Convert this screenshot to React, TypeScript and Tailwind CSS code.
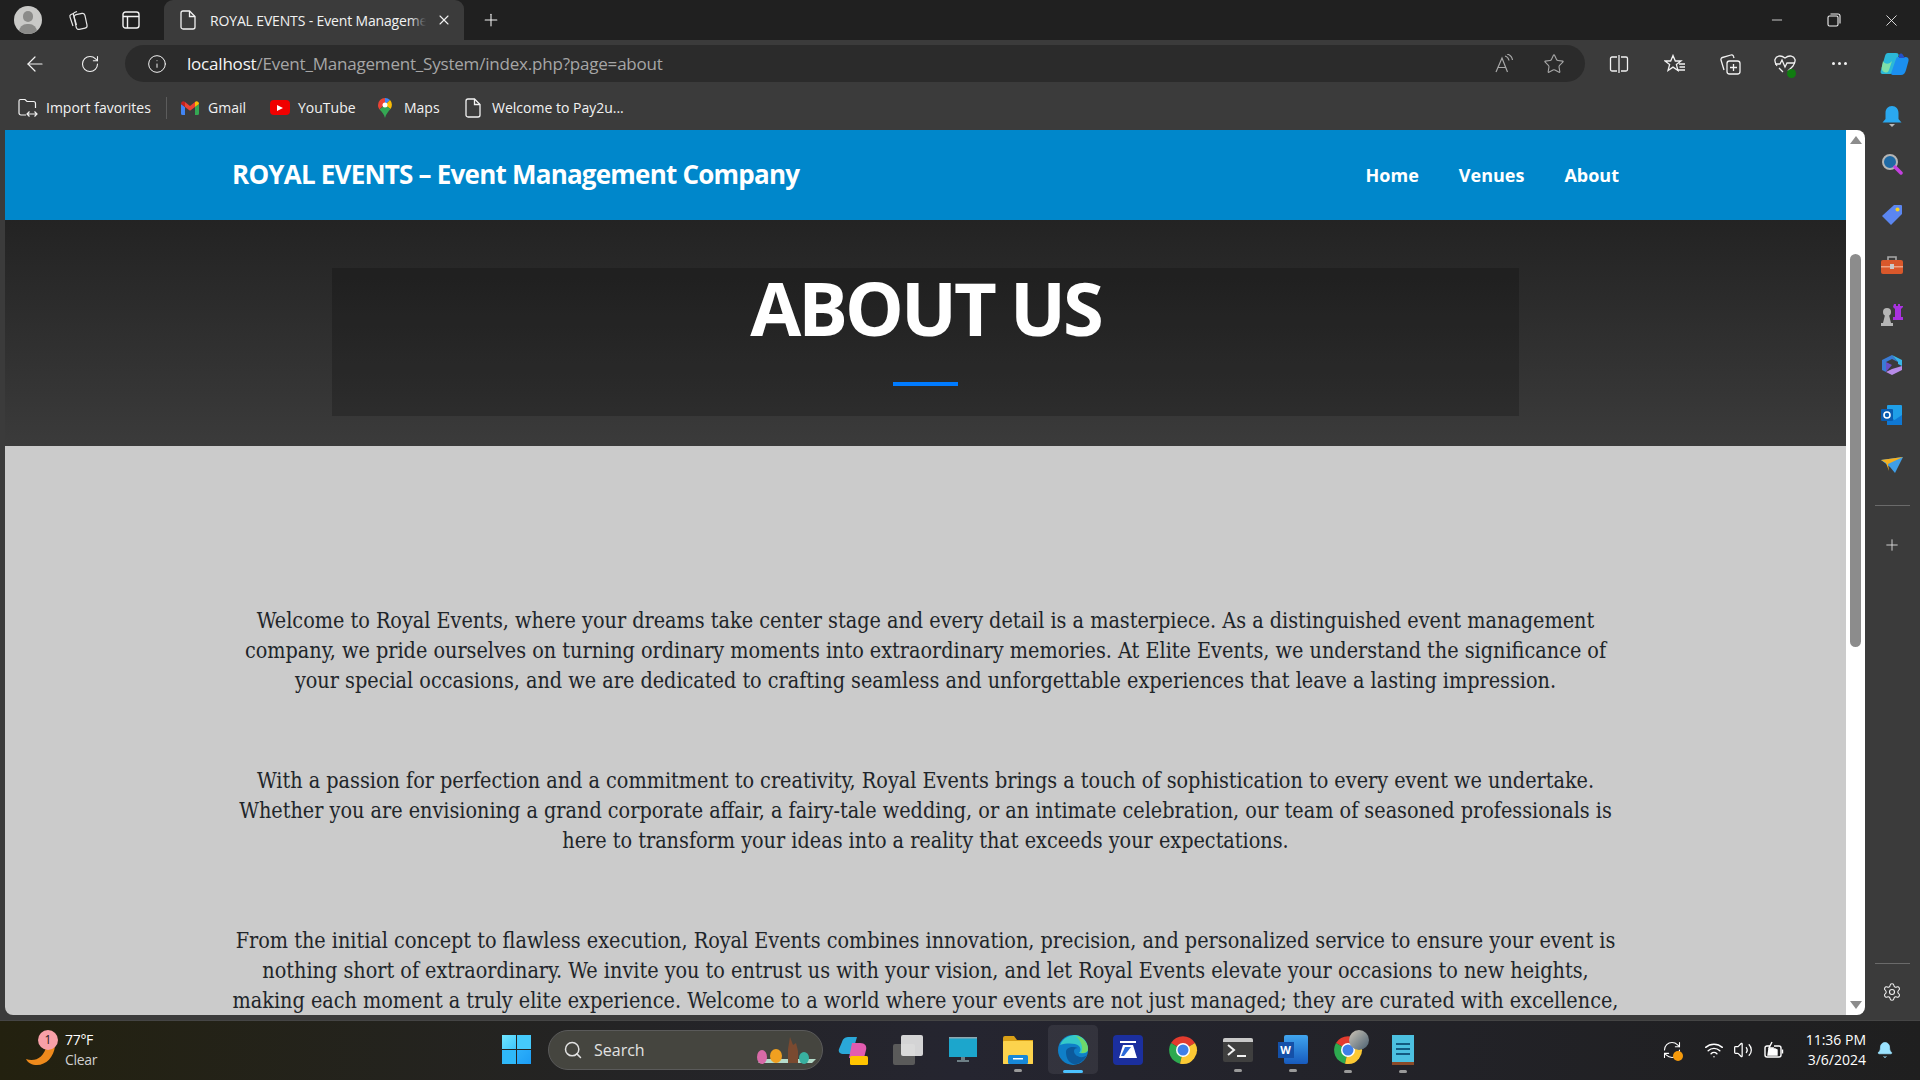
import { ArrowLeft, Bell, Info, Minus, Plus, RefreshCw, RotateCw, Search, Settings, Star, Volume2, Wifi, X } from 'lucide-react';
import type { ReactNode } from 'react';

const paragraphs = [
    [
        'Welcome to Royal Events, where your dreams take center stage and every detail is a masterpiece. As a distinguished event management',
        'company, we pride ourselves on turning ordinary moments into extraordinary memories. At Elite Events, we understand the significance of',
        'your special occasions, and we are dedicated to crafting seamless and unforgettable experiences that leave a lasting impression.',
    ],
    [
        'With a passion for perfection and a commitment to creativity, Royal Events brings a touch of sophistication to every event we undertake.',
        'Whether you are envisioning a grand corporate affair, a fairy-tale wedding, or an intimate celebration, our team of seasoned professionals is',
        'here to transform your ideas into a reality that exceeds your expectations.',
    ],
    [
        'From the initial concept to flawless execution, Royal Events combines innovation, precision, and personalized service to ensure your event is',
        'nothing short of extraordinary. We invite you to entrust us with your vision, and let Royal Events elevate your occasions to new heights,',
        'making each moment a truly elite experience. Welcome to a world where your events are not just managed; they are curated with excellence,',
    ],
];

function DocIcon() {
    return (
        <svg width="16" height="20" viewBox="0 0 16 20" fill="none" stroke="#f2f2f2" strokeWidth="1.3">
            <path d="M3 1h6.5L15 6.5V17a2 2 0 0 1-2 2H3a2 2 0 0 1-2-2V3a2 2 0 0 1 2-2z" />
            <path d="M9.5 1v5.5H15" />
        </svg>
    );
}

function ChromeIcon() {
    return (
        <svg width="30" height="30" viewBox="0 0 30 30">
            <path d="M15 15 3 8a14 14 0 0 1 24 0z" fill="#e33b2e" />
            <path d="M15 15 3 8a14 14 0 0 0 9 20.7z" fill="#2da94f" />
            <path d="M15 15 27 8a14 14 0 0 1-15 20.7z" fill="#fcc934" />
            <circle cx="15" cy="15" r="7" fill="#fff" />
            <circle cx="15" cy="15" r="5.5" fill="#3f7fe8" />
        </svg>
    );
}

function Slot({ w, children, className = '' }: { w: string; children?: ReactNode; className?: string }) {
    return <div className={`flex shrink-0 items-center justify-center ${w} ${className}`}>{children}</div>;
}

function TabStrip() {
    return (
        <div className="flex h-10 shrink-0 items-end bg-[#202020] text-[#f2f2f2]">
            <Slot w="w-[56px]" className="h-10">
                <div className="relative h-7 w-7 overflow-hidden rounded-full bg-[#c9c9c7]">
                    <div className="absolute left-[9px] top-[5px] h-[11px] w-[10px] rounded-full bg-[#8b8b89]" />
                    <div className="absolute left-[5px] top-[18px] h-4 w-[18px] rounded-full bg-[#8b8b89]" />
                </div>
            </Slot>
            <Slot w="w-[44px]" className="h-10">
                <svg width="22" height="22" viewBox="0 0 22 22" fill="none" stroke="#e6e6e6" strokeWidth="1.2">
                    <rect x="8" y="5" width="11" height="15" rx="2.5" transform="rotate(-12 13 12)" />
                    <path d="M6.5 4.5 4 5.5a2 2 0 0 0-1 2.5l3 9" />
                    <path d="M10 2.5 7.5 3.5a2 2 0 0 0-1 2.5l3 10" />
                </svg>
            </Slot>
            <Slot w="w-[62px]" className="h-10">
                <svg width="18" height="18" viewBox="0 0 18 18" fill="none" stroke="#f2f2f2" strokeWidth="1.4">
                    <rect x="1" y="1" width="16" height="16" rx="2.5" />
                    <path d="M1 5.5h16M5.5 5.5V17" />
                </svg>
            </Slot>
            <div className="ml-[2px] flex h-10 w-[300px] shrink-0 items-center rounded-t-[9px] bg-[#3b3b3b] pl-4 pr-[12px]">
                <DocIcon />
                <div className="relative ml-[14px] w-[216px] overflow-hidden">
                    <span className="block whitespace-nowrap font-['Open_Sans',sans-serif] text-[14px] tracking-[-0.15px]">
                        ROYAL EVENTS - Event Management Company
                    </span>
                    <div className="absolute inset-y-0 right-0 w-4 bg-gradient-to-r from-transparent to-[#3b3b3b]" />
                </div>
                <X size={16} strokeWidth={1.6} className="ml-auto" />
            </div>
            <Slot w="w-[54px]" className="h-10">
                <Plus size={20} strokeWidth={1.3} />
            </Slot>
            <div className="flex-1" />
            <Slot w="w-[57px]" className="h-10"><Minus size={16} strokeWidth={1.2} /></Slot>
            <Slot w="w-[57px]" className="h-10">
                <svg width="14" height="14" viewBox="0 0 14 14" fill="none" stroke="#f2f2f2" strokeWidth="1.1">
                    <rect x="1" y="3" width="10" height="10" rx="1.5" />
                    <path d="M3.5 1h7.5A2 2 0 0 1 13 3v7.5" />
                </svg>
            </Slot>
            <Slot w="w-[58px]" className="h-10"><X size={19} strokeWidth={1.1} /></Slot>
        </div>
    );
}

function AddressBar() {
    return (
        <div className="flex h-[47px] shrink-0 items-center bg-[#3b3b3b] text-[#f2f2f2]">
            <Slot w="w-[70px]"><ArrowLeft size={24} strokeWidth={1.2} /></Slot>
            <Slot w="w-[40px]"><RotateCw size={20} strokeWidth={1.3} /></Slot>
            <div className="ml-[15px] flex h-[37px] w-[1460px] shrink-0 items-center rounded-full bg-[#2b2b2b] pl-[22px] pr-[20px]">
                <Info size={20} strokeWidth={1.2} />
                <span className="ml-[20px] font-['Open_Sans',sans-serif] text-[17px] tracking-[-0.2px] text-[#f5f5f5]">
                    localhost<span className="text-[#a6a6a6]">/Event_Management_System/index.php?page=about</span>
                </span>
                <div className="ml-auto flex items-center gap-[28px] text-[#a8a8a8]">
                    <svg width="20" height="20" viewBox="0 0 20 20" fill="none" stroke="#a8a8a8" strokeWidth="1.2">
                        <path d="M1 18 7 4l5.500 14M3 13.500h8" />
                        <path d="M10 2c2 .5 3.500 2 4 4.500M12 0c3 .8 5 3 5.500 6" />
                    </svg>
                    <Star size={22} strokeWidth={1.2} />
                </div>
            </div>
            <Slot w="w-[24px]" />
            <Slot w="w-[20px]">
                <svg width="20" height="20" viewBox="0 0 20 20" fill="none" stroke="#f2f2f2" strokeWidth="1.3">
                    <path d="M8 3H3a1.5 1.5 0 0 0-1.5 1.5v11A1.5 1.5 0 0 0 3 17h5M12 3h5a1.5 1.5 0 0 1 1.5 1.5v11A1.5 1.5 0 0 1 17 17h-5M10 1v18" />
                </svg>
            </Slot>
            <Slot w="w-[35px]" />
            <Slot w="w-[22px]">
                <svg width="22" height="20" viewBox="0 0 22 20" fill="none" stroke="#f2f2f2" strokeWidth="1.3">
                    <path d="M9 1.5 11.3 7H17l-4.6 3.6 1.6 5.9-5-3.4-5 3.4 1.6-5.9L1 7h5.7z" />
                    <path d="M15 10h6M15.500 13h5.500M13 16h8" />
                </svg>
            </Slot>
            <Slot w="w-[33px]" />
            <Slot w="w-[22px]">
                <svg width="22" height="22" viewBox="0 0 22 22" fill="none" stroke="#f2f2f2" strokeWidth="1.3">
                    <rect x="8" y="8" width="13" height="13" rx="2.5" />
                    <path d="M14.5 11v7M11 14.5h7" />
                    <path d="M5 17 2 7a2 2 0 0 1 1.400-2.500L12 2a2 2 0 0 1 2.500 1.400L15 5" />
                </svg>
            </Slot>
            <Slot w="w-[33px]" />
            <Slot w="w-[22px]" className="relative">
                <svg width="22" height="20" viewBox="0 0 22 20" fill="none" stroke="#f2f2f2" strokeWidth="1.3">
                    <path d="M3 12C1 9 .5 7.500 1 5.500 2 2 6.500 .5 11 4c4.500-3.500 9-2 10 1.500.5 2 0 3.500-2 6.500l-5 5" />
                    <path d="M1 10h5l2-4 3 7 2-4h8M5 14l4 4" />
                </svg>
                <span className="absolute -bottom-[4px] right-0 h-[9px] w-[9px] rounded-full bg-[#107c10]" />
            </Slot>
            <Slot w="w-[32px]" />
            <Slot w="w-[22px]">
                <div className="flex gap-[3px]">
                    <span className="h-[3px] w-[3px] rounded-full bg-[#f2f2f2]" />
                    <span className="h-[3px] w-[3px] rounded-full bg-[#f2f2f2]" />
                    <span className="h-[3px] w-[3px] rounded-full bg-[#f2f2f2]" />
                </div>
            </Slot>
            <Slot w="w-[30px]" />
            <Slot w="w-[30px]">
                <svg width="30" height="26" viewBox="0 0 30 26">
                    <path d="M8 2h8c2 0 3 1 2.500 3L14 20c-.6 2-2 3-4 3H3c-2 0-3-1-2-4L5 5c.5-2 1.500-3 3-3z" fill="#2bb8d8" />
                    <path d="M3 10c2 4 7 3 9 0L9 19c-1 3-3 3-5 2-2-1-3-3-2-6z" fill="#7ee0a8" />
                    <path d="M18 6h7c3 0 4 1.500 3.500 4L26 19c-.7 3-2.500 5-5 5h-8c-2 0-2-1-1.500-3L16 8c.3-1.300 1-2 2-2z" fill="#1b8fef" />
                    <path d="M19 4c1-2 3-2 4 0l2 3h-6z" fill="#2450c8" />
                </svg>
            </Slot>
        </div>
    );
}

function Bookmark({ icon, label, w, gap = 'gap-[8px]' }: { icon: ReactNode; label: string; w: string; gap?: string }) {
    return (
        <div className={`flex shrink-0 items-center ${gap} ${w}`}>
            {icon}
            <span className="whitespace-nowrap font-['Open_Sans',sans-serif] text-[14px] text-[#f2f2f2]">{label}</span>
        </div>
    );
}

function Bookmarks() {
    return (
        <div className="flex h-[43px] shrink-0 items-center bg-[#3b3b3b] pb-[2px] pl-[18px]">
            <Bookmark
                w="w-[148px]"
                label="Import favorites"
                icon={
                    <svg width="20" height="20" viewBox="0 0 20 20" fill="none" stroke="#f2f2f2" strokeWidth="1.2">
                        <path d="M8 17H3a2 2 0 0 1-2-2V3a1.500 1.500 0 0 1 1.500-1.500H7l2 2h6.500A2 2 0 0 1 17.500 5.500V10" />
                        <path d="M9 16h10M11.500 13.500 9 16l2.500 2.500M16.500 13.500 19 16l-2.500 2.500" />
                    </svg>
                }
            />
            <div className="mr-[14px] h-[22px] w-px shrink-0 bg-[#5c5c5c]" />
            <Bookmark
                w="w-[89px]"
                label="Gmail"
                gap="gap-[9px]"
                icon={
                    <svg width="18" height="14" viewBox="0 0 18 14">
                        <path d="M0 3v9.500A1.500 1.500 0 0 0 1.500 14H4V6z" fill="#4285f4" />
                        <path d="M14 6v8h2.500a1.500 1.500 0 0 0 1.500-1.500V3z" fill="#34a853" />
                        <path d="M4 6V1L9 5l5-4v5L9 9.800z" fill="#ea4335" />
                        <path d="M0 3c0-2.500 2.500-3.500 4-2v5z" fill="#c5221f" />
                        <path d="M14 1c1.500-1.500 4-.5 4 2l-4 3z" fill="#fbbc04" />
                    </svg>
                }
            />
            <Bookmark
                w="w-[108px]"
                label="YouTube"
                icon={
                    <div className="flex h-[15px] w-[20px] items-center justify-center rounded-[4px] bg-[#f00000]">
                        <div className="h-0 w-0 border-y-[3.500px] border-l-[6px] border-y-transparent border-l-white" />
                    </div>
                }
            />
            <Bookmark
                w="w-[87px]"
                label="Maps"
                gap="gap-[12px]"
                icon={
                    <svg width="14" height="20" viewBox="0 0 14 20">
                        <path d="M7 0a7 7 0 0 0-7 7c0 2 .7 3.300 1.500 4.500L7 6z" fill="#ea4335" />
                        <path d="M7 0a7 7 0 0 1 5 2L7 7z" fill="#4285f4" />
                        <path d="M12 2a7 7 0 0 1 .5 9L7 7z" fill="#fbbc04" />
                        <path d="M1.500 11.500 7 7l5.500 4C10 14 8 16 7 20c-1-4-3-6-5.500-8.500z" fill="#34a853" />
                        <circle cx="7" cy="7" r="2.500" fill="#fff" />
                    </svg>
                }
            />
            <Bookmark w="w-[170px]" gap="gap-[11px]" label="Welcome to Pay2u..." icon={<DocIcon />} />
        </div>
    );
}

function PageContent() {
    return (
        <div className="flex h-full min-w-0 flex-1 flex-col overflow-hidden">
            <nav className="flex h-[90px] shrink-0 items-center bg-[#0087cb] pl-[227px] font-['Open_Sans',sans-serif] font-bold text-white">
                <span className="mt-[-2px] text-[26px] tracking-[-0.78px]">ROYAL EVENTS – Event Management Company</span>
                <div className="ml-auto mr-[227px] flex gap-[40px] text-[18px]">
                    <span>Home</span>
                    <span>Venues</span>
                    <span>About</span>
                </div>
            </nav>
            <header className="flex h-[226px] shrink-0 justify-center bg-gradient-to-b from-[#232323] to-[#3b3b3b] pt-[48px]">
                <div className="flex h-[148px] w-[1187px] flex-col items-center bg-black/20">
                    <h1 className="mt-[-4px] font-['Open_Sans',sans-serif] text-[74px] font-bold leading-[88px] tracking-[-3px] text-white">
                        ABOUT US
                    </h1>
                    <div className="mt-[30px] h-1 w-[65px] bg-[#007bff]" />
                </div>
            </header>
            <main className="flex-1 bg-[#cbcbcb] pt-[160px] text-center font-['DejaVu_Serif_Condensed','DejaVu_Serif',serif] text-[21.400px] leading-[30px] text-[#212529]">
                {paragraphs.map((lines) => (
                    <p key={lines[0]} className="mb-[70px]">
                        {lines.map((line) => (
                            <span key={line} className="block whitespace-nowrap">{line}</span>
                        ))}
                    </p>
                ))}
            </main>
        </div>
    );
}

function Scrollbar() {
    return (
        <div className="flex h-full w-[19px] shrink-0 flex-col items-center bg-white pt-[6px]">
            <div className="h-0 w-0 border-x-[6px] border-b-[8px] border-x-transparent border-b-[#8c8c8c]" />
            <div className="mt-[110px] h-[393px] w-[11px] rounded-full bg-[#8c8c8c]" />
            <div className="mt-auto mb-[6px] h-0 w-0 border-x-[6px] border-t-[8px] border-x-transparent border-t-[#8c8c8c]" />
        </div>
    );
}

function Sidebar() {
    return (
        <div className="flex h-full w-[55px] shrink-0 flex-col items-center pr-px">
            <div className="mt-[-28px] flex h-[30px] items-center">
                <svg width="20" height="22" viewBox="0 0 20 22">
                    <path d="M10 0c4 0 6.500 3 6.500 7v6l3 3.500H.500l3-3.500V7c0-4 2.500-7 6.500-7z" fill="#2aa8ef" />
                    <path d="M7 18h6l-3 3z" fill="#b8b8b8" />
                </svg>
            </div>
            <div className="mt-[7px] flex flex-col items-center">
                <Slot w="w-[54px]" className="h-[50px]">
                    <svg width="22" height="22" viewBox="0 0 22 22">
                        <circle cx="9" cy="9" r="7" fill="#1f6aa5" stroke="#b5b5b5" strokeWidth="2" />
                        <path d="M14 14l6 6" stroke="#c440e0" strokeWidth="3.500" strokeLinecap="round" />
                    </svg>
                </Slot>
                <Slot w="w-[54px]" className="h-[51px]">
                    <svg width="22" height="22" viewBox="0 0 22 22">
                        <path d="M13 1h7a1 1 0 0 1 1 1v8L10 21 1 12z" fill="#5b86f0" />
                        <circle cx="16.500" cy="5.500" r="2" fill="#f5d020" />
                    </svg>
                </Slot>
                <Slot w="w-[54px]" className="h-[50px]">
                    <svg width="24" height="20" viewBox="0 0 24 20">
                        <path d="M8 5V2h8v3" fill="none" stroke="#a8a8a8" strokeWidth="1.600" />
                        <rect x="1" y="5" width="22" height="14" rx="2" fill="#d9582b" />
                        <rect x="1" y="11" width="22" height="1.500" fill="#f0a080" />
                        <rect x="10" y="9" width="4" height="5" fill="#c9c9c9" />
                    </svg>
                </Slot>
                <Slot w="w-[54px]" className="h-[50px]">
                    <svg width="24" height="24" viewBox="0 0 24 24">
                        <path d="M14 1h2v2h2V1h2v2h3v1l-2 2v8h2v3H13v-3h2V6l-2-2z" fill="#a832e0" />
                        <circle cx="7" cy="9" r="4" fill="#b5b5b5" />
                        <path d="M5 12h4l2 8h2v3H1v-3h2z" fill="#b5b5b5" />
                    </svg>
                </Slot>
                <Slot w="w-[54px]" className="h-[50px]">
                    <svg width="22" height="22" viewBox="0 0 22 22">
                        <path d="M11 1 1 6v10l4 2V8l6-3 6 3z" fill="#3a7bd5" />
                        <path d="M11 1l10 5v6l-4-2V8z" fill="#38b6e8" />
                        <path d="M21 12v4l-10 5-6-3 6-3z" fill="#b78be8" />
                        <path d="M5 8l6 3-6 7z" fill="#6a4fc8" />
                    </svg>
                </Slot>
                <Slot w="w-[54px]" className="h-[50px]">
                    <svg width="22" height="22" viewBox="0 0 22 22">
                        <rect x="6" y="1" width="15" height="20" rx="1" fill="#1f9fe8" />
                        <path d="M6 11l7.500 5L21 11v10H6z" fill="#0f78d4" />
                        <rect x="0" y="5" width="12" height="12" rx="1" fill="#0a5cb0" />
                        <circle cx="6" cy="11" r="3" fill="none" stroke="#fff" strokeWidth="1.600" />
                    </svg>
                </Slot>
                <Slot w="w-[54px]" className="h-[50px]">
                    <svg width="22" height="16" viewBox="0 0 22 16">
                        <path d="M0 3 22 0 14 16 9 10z" fill="#3f9ee8" />
                        <path d="M0 3 22 0 7 7l1 7-3-8z" fill="#f4b020" />
                    </svg>
                </Slot>
            </div>
            <div className="mt-[15px] h-px w-[35px] bg-[#6a6a6a]" />
            <Plus size={18} strokeWidth={1.2} className="mt-[30px] text-[#e0e0e0]" />
            <div className="mt-auto h-px w-[35px] bg-[#6a6a6a]" />
            <Settings size={20} strokeWidth={1.3} className="mt-[18px] mb-[13px] text-[#f2f2f2]" />
        </div>
    );
}

function Taskbar() {
    return (
        <footer className="flex h-[60px] shrink-0 items-center border-t border-[#454545] bg-[#1f1f17] bg-gradient-to-r from-[#23210f] via-[#252530] to-[#1f1f1f] pb-[2px] font-['Open_Sans',sans-serif] text-white">
            <div className="ml-[26px] flex w-[476px] shrink-0 items-center">
                <div className="relative h-8 w-8">
                    <svg width="30" height="22" viewBox="0 0 30 22" className="absolute bottom-0 left-0">
                        <path d="M29 2c-1 11-9 19-18 19C6 21 2 19 0 15c8 3 18 0 21-15z" fill="#ee8a1c" />
                    </svg>
                    <div className="absolute left-[12px] top-[-4px] flex h-[20px] w-[20px] items-center justify-center rounded-full bg-[#f9a0a8] text-[12px] text-[#2b1a1a]">1</div>
                </div>
                <div className="ml-[7px] text-[14px] leading-[20px] tracking-[-0.3px]">
                    <div>77°F</div>
                    <div className="text-[#d0d0d0]">Clear</div>
                </div>
            </div>
            <div className="grid h-[29px] w-[29px] shrink-0 grid-cols-2 gap-[1px]">
                <span className="bg-gradient-to-br from-[#6fe6ff] to-[#3ec6fa]" />
                <span className="bg-[#45cafb]" />
                <span className="bg-[#2fb8f8]" />
                <span className="bg-gradient-to-br from-[#2db0fa] to-[#1c9df5]" />
            </div>
            <div className="relative ml-[17px] flex h-10 w-[275px] shrink-0 items-center rounded-full border border-[#5a5a5a] bg-[#45453f] pl-[14px] text-[16px] text-[#e2e2e2]">
                <Search size={20} strokeWidth={1.8} />
                <span className="ml-[11px]">Search</span>
                <svg width="64" height="32" viewBox="0 0 64 32" className="absolute bottom-[2px] right-[4px]">
                    <path d="M4 28h54l4-4H8z" fill="#b5dccb" />
                    <ellipse cx="8" cy="22" rx="5" ry="7" fill="#d86aa8" />
                    <ellipse cx="22" cy="21" rx="6" ry="7" fill="#f0a020" />
                    <path d="M34 28V14l2-12 3 8 3-2 2 8v12z" fill="#7a4a30" />
                    <ellipse cx="50" cy="23" rx="5" ry="6" fill="#38b0a0" />
                </svg>
            </div>
            <div className="ml-[2px] flex items-center">
                <Slot w="w-[55px]" className="relative">
                    <svg width="30" height="32" viewBox="0 0 30 32">
                        <path d="M4 8c1-4 4-5 7-5h8l-5 17H6c-4 0-6-2-5-5z" fill="#2aa8d8" />
                        <path d="M14 9h8c5 0 7 3 6 7l-2 8H11z" fill="#e35cb0" />
                        <rect x="12" y="22" width="18" height="9" rx="1.500" fill="#ffc400" />
                    </svg>
                </Slot>
                <Slot w="w-[55px]">
                    <div className="relative h-[30px] w-[30px]">
                        <div className="absolute bottom-0 left-0 h-[21px] w-[22px] rounded-[2px] bg-[#5a5a5a]" />
                        <div className="absolute right-0 top-0 h-[21px] w-[22px] rounded-[2px] bg-[#e8e8e8]/90" />
                    </div>
                </Slot>
                <Slot w="w-[55px]">
                    <svg width="28" height="26" viewBox="0 0 28 26">
                        <rect x="0" y="0" width="28" height="20" fill="#1ca6cc" />
                        <rect x="0" y="0" width="28" height="1.500" fill="#8fa8b0" />
                        <rect x="12" y="20" width="4" height="3" fill="#6e7f86" />
                        <rect x="8" y="23" width="12" height="2" fill="#6e7f86" />
                    </svg>
                </Slot>
                <Slot w="w-[55px]" className="relative">
                    <svg width="30" height="28" viewBox="0 0 30 28">
                        <path d="M0 2a2 2 0 0 1 2-2h9l3 4h16v24H0z" fill="#d9a017" />
                        <rect x="0" y="5" width="30" height="23" rx="1" fill="#fcd34d" />
                        <rect x="5" y="19" width="20" height="9" rx="1.500" fill="#1788d8" />
                        <rect x="10" y="22" width="10" height="1.500" fill="#fff" />
                    </svg>
                    <span className="absolute -bottom-[8px] h-[3px] w-[8px] rounded-full bg-[#9a9a9a]" />
                </Slot>
                <Slot w="w-[55px]" className="relative">
                    <div className="flex h-[49px] w-[50px] items-center justify-center rounded-[5px] bg-white/[0.07]">
                        <svg width="30" height="30" viewBox="0 0 30 30">
                            <circle cx="15" cy="15" r="15" fill="#0f7fc8" />
                            <path d="M2 10C5 2 13 0 18 0c7 1 12 7 12 14 0 4-4 5-9 4 2-2 2-5 0-7-4-3-12-3-19-1z" fill="#35c9c9" />
                            <path d="M18 1c7 1 12 7 12 13 0 3-3 4-7 4 3-5 0-12-5-17z" fill="#6fd86a" />
                            <path d="M8 17c0-5 7-6 12-4-4 0-5 3-3 6 3 4 9 4 12 1-3 6-9 10-14 9-5-2-7-7-7-12z" fill="#0c5a9c" />
                        </svg>
                    </div>
                    <span className="absolute bottom-[1px] h-[3px] w-[20px] rounded-full bg-[#4cc2ff]" />
                </Slot>
                <Slot w="w-[55px]">
                    <div className="flex h-[30px] w-[30px] flex-col items-center justify-center rounded-[4px] bg-[#1b2f9e]">
                        <svg width="22" height="22" viewBox="0 0 22 22">
                            <path d="M3 2h16v2H3z" fill="#fff" />
                            <path d="M6 6h10l4 13H2z" fill="#fff" />
                            <path d="M8 8h6l-7 9H4z" fill="#2c6ad8" />
                        </svg>
                    </div>
                </Slot>
                <Slot w="w-[55px]"><ChromeIcon /></Slot>
                <Slot w="w-[55px]" className="relative">
                    <div className="h-[24px] w-[30px] overflow-hidden rounded-[2px] bg-[#3f3f3f]">
                        <div className="h-[4px] bg-[#c9c9c9]" />
                        <svg width="30" height="20" viewBox="0 0 30 20" fill="none" stroke="#f2f2f2" strokeWidth="2">
                            <path d="M5 3l6 5-6 5M14 14h9" />
                        </svg>
                    </div>
                    <span className="absolute -bottom-[10px] h-[3px] w-[8px] rounded-full bg-[#9a9a9a]" />
                </Slot>
                <Slot w="w-[55px]" className="relative">
                    <div className="relative h-[29px] w-[30px]">
                        <div className="absolute right-0 top-0 h-[29px] w-[24px] rounded-[2px] bg-gradient-to-b from-[#41a5ee] to-[#185abd]" />
                        <div className="absolute left-0 top-[7px] flex h-[16px] w-[16px] items-center justify-center bg-[#1450a8] font-['Open_Sans',sans-serif] text-[11px] font-bold">W</div>
                    </div>
                    <span className="absolute -bottom-[8px] h-[3px] w-[8px] rounded-full bg-[#9a9a9a]" />
                </Slot>
                <Slot w="w-[55px]" className="relative">
                    <ChromeIcon />
                    <span className="absolute right-[6px] -top-[5px] h-[20px] w-[20px] rounded-full bg-gradient-to-br from-[#cfc6b8] to-[#4a6070]" />
                    <span className="absolute -bottom-[8px] h-[3px] w-[8px] rounded-full bg-[#9a9a9a]" />
                </Slot>
                <Slot w="w-[55px]" className="relative">
                    <div className="h-[30px] w-[22px] border-b-[3px] border-[#8a4a28] bg-[#4cc0e0] pt-[8px]">
                        <div className="mx-[4px] mb-[3px] h-[2px] bg-[#135a80]" />
                        <div className="mx-[4px] mb-[3px] h-[2px] bg-[#135a80]" />
                        <div className="mx-[4px] h-[2px] bg-[#135a80]" />
                    </div>
                    <span className="absolute -bottom-[8px] h-[3px] w-[8px] rounded-full bg-[#9a9a9a]" />
                </Slot>
            </div>
            <div className="ml-auto flex items-center">
                <div className="relative mr-[22px] h-5 w-5">
                    <RefreshCw size={20} strokeWidth={1.3} />
                    <span className="absolute -bottom-[1px] -right-[1px] h-[10px] w-[10px] rounded-full bg-[#f59a0c]" />
                </div>
                <Wifi size={20} strokeWidth={1.7} className="mr-[9px]" />
                <Volume2 size={20} strokeWidth={1.5} className="mr-[11px]" />
                <svg width="20" height="18" viewBox="0 0 20 18" fill="none" stroke="#fff" strokeWidth="1.400">
                    <path d="M6 5H3a2 2 0 0 0-2 2v7a2 2 0 0 0 2 2h12a2 2 0 0 0 2-2V7a2 2 0 0 0-2-2h-5" />
                    <path d="M4 14 5 8h6l2 1v5z" fill="#fff" />
                    <path d="M18.500 8.500v4M8 1 5 7h4l-2 5" />
                </svg>
                <div className="ml-[22px] text-right text-[14px] leading-[20px]">
                    <div>11:36 PM</div>
                    <div>3/6/2024</div>
                </div>
                <Bell size={18} fill="#9be3ff" strokeWidth={1} className="ml-[10px] mr-[26px] text-[#9be3ff]" />
            </div>
        </footer>
    );
}

export default function App() {
    return (
        <div className="flex h-screen w-full flex-col overflow-hidden bg-[#3b3b3b]">
            <TabStrip />
            <AddressBar />
            <Bookmarks />
            <div className="flex min-h-0 flex-1 pl-[5px]">
                <div className="flex min-w-0 flex-1 overflow-hidden rounded-b-[8px] rounded-tr-[8px]">
                    <PageContent />
                    <Scrollbar />
                </div>
                <Sidebar />
            </div>
            <div className="h-[5px] shrink-0" />
            <Taskbar />
        </div>
    );
}
